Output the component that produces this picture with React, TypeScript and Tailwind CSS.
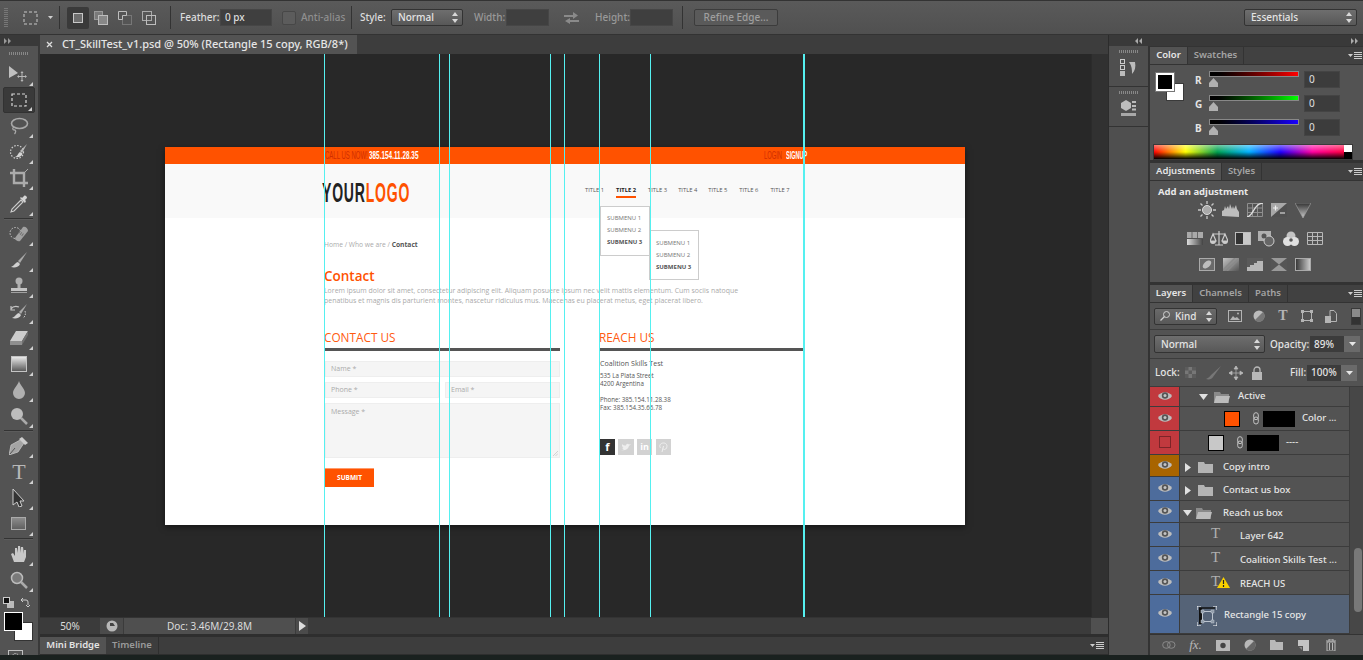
import React from "react";

const UI = "[font-family:'Noto_Sans','Open_Sans',sans-serif]";

function Ic({ w = 20, h = 20, children, className = "" }: { w?: number; h?: number; children: React.ReactNode; className?: string }) {
  return (
    <svg width={w} height={h} viewBox={`0 0 ${w} ${h}`} className={"shrink-0 " + className}>
      {children}
    </svg>
  );
}

function Updown() {
  return (
    <Ic w={6} h={11}>
      <path d="M3 0L6 4H0zM3 11L0 7H6z" fill="#d8d8d8" />
    </Ic>
  );
}

function Grad({ id, a = "#d0d0d0", b = "#6a6a6a", x2 = 1, y2 = 1 }: { id: string; a?: string; b?: string; x2?: number; y2?: number }) {
  return (
    <defs>
      <linearGradient id={id} x1="0" y1="0" x2={x2} y2={y2}>
        <stop offset="0" stopColor={a} />
        <stop offset="1" stopColor={b} />
      </linearGradient>
    </defs>
  );
}

function Tool({ children, active }: { children: React.ReactNode; active?: boolean }) {
  return (
    <div
      className={
        "relative shrink-0 h-[26px] w-[32px] ml-[3px] flex items-center justify-center rounded-[2px] " +
        (active ? "bg-[#3a3a3a] border border-[#323232]" : "")
      }
    >
      {children}
      <svg width="4" height="4" viewBox="0 0 4 4" className="absolute right-[2px] bottom-[1px]">
        <path d="M4 0V4H0z" fill="#d0d0d0" />
      </svg>
    </div>
  );
}

function Sep() {
  return <div className="shrink-0 h-[2px] w-[29px] ml-[4px] my-[1px] bg-[#333333] border-b border-[#5c5c5c]" />;
}

const toolGroups: React.ReactNode[][] = [
  [
    <Ic w={20} h={18} key="m"><path d="M0 1L9 8L0 13z" fill="#c0c0c0" /><path d="M13 7v9M9 11.500h8" stroke="#b8b8b8" strokeWidth="1" /><path d="M13 6l1.500 2h-3zM13 17l1.500-2h-3zM8 11.500l2-1.500v3zM18 11.500l-2-1.500v3z" fill="#b8b8b8" /></Ic>,
    <Ic w={16} h={14} key="mq"><rect x="1" y="1" width="14" height="12" fill="none" stroke="#d8d8d8" strokeWidth="1.200" strokeDasharray="3 2" /></Ic>,
    <Ic w={20} h={18} key="l"><ellipse cx="10.500" cy="6.500" rx="8" ry="5" fill="none" stroke="#a8a8a8" strokeWidth="1.600" /><path d="M5 10c-2 1-1.500 3 .5 3s1 3 0 4" fill="none" stroke="#a8a8a8" strokeWidth="1.300" /></Ic>,
    <Ic w={20} h={18} key="q"><circle cx="8" cy="9" r="6.500" fill="none" stroke="#cccccc" strokeWidth="1.200" strokeDasharray="1.500 1.500" /><path d="M18 1L11 8l2 2z" fill="#b8b8b8" /><path d="M11 9c-2 1-2 4-5 5 4 1 7-1 7.500-3.500z" fill="#d4d4d4" /></Ic>,
    <Ic w={18} h={18} key="c"><path d="M4 0v14h14M0 4h14v14" fill="none" stroke="#ababab" strokeWidth="2.400" /><path d="M14 4l4-4" stroke="#ababab" strokeWidth="1" /></Ic>,
    <Ic w={18} h={18} key="e"><path d="M11 5L2 14l-1 3 3-1 9-9z" fill="#555555" stroke="#cccccc" strokeWidth="1.100" /><path d="M10 3l5 5 1-2-1-1 2-2c0-2-2-3-3-2l-2 2-1-1z" fill="#d4d4d4" /></Ic>,
  ],
  [
    <Ic w={20} h={18} key="h"><circle cx="6.500" cy="8" r="5.500" fill="none" stroke="#cccccc" strokeDasharray="1.500 1.500" /><path d="M6 13L14 2c2-1 5 1 5 4l-8 10c-2 1-5-1-5-3z" fill="#a0a0a0" /><path d="M10 7l4 3" stroke="#707070" strokeWidth="3" strokeDasharray="1 1" /></Ic>,
    <Ic w={20} h={18} key="b"><path d="M18 1L9 10l2 2z" fill="#aaaaaa" /><path d="M9 11c-2 0-3 3-7 5 4 1 8 0 9-3z" fill="#d0d0d0" /></Ic>,
    <Ic w={20} h={18} key="s"><circle cx="10" cy="4" r="3.500" fill="#b0b0b0" /><path d="M8.500 6h3v5h-3z" fill="#b0b0b0" /><path d="M2 11h16v3H2z" fill="#c4c4c4" /><path d="M2 15.500h16" stroke="#a0a0a0" /></Ic>,
    <Ic w={20} h={18} key="hb"><path d="M18 1L10 9l2 2z" fill="#aaaaaa" /><path d="M10 10c-2 0-3 3-7 5 4 1 8 0 9-3z" fill="#d0d0d0" /><path d="M2 6c2-3 5-3 8-2M2 3v4h4" fill="none" stroke="#c4c4c4" strokeWidth="1.200" /><path d="M16 8c1 3 0 6-2 7" stroke="#c4c4c4" strokeDasharray="1.500 1" fill="none" /></Ic>,
    <Ic w={20} h={16} key="er"><path d="M7 1h12L13 11H1z" fill="#cccccc" /><path d="M1 11h12v4H1z" fill="#8e8e8e" /><path d="M13 11l6-10v4l-6 10z" fill="#707070" /></Ic>,
    <Ic w={16} h={16} key="gr"><Grad id="g1" a="#eeeeee" b="#555555" x2={0} y2={1} /><rect x="0.500" y="0.500" width="15" height="15" fill="url(#g1)" stroke="#c4c4c4" /></Ic>,
    <Ic w={14} h={18} key="bl"><path d="M7 0C6 4 1 8 1 12a6 6 0 0 0 12 0C13 8 8 4 7 0z" fill="#b0b0b0" /></Ic>,
    <Ic w={18} h={18} key="dd"><circle cx="7" cy="7" r="6" fill="#bdbdbd" /><path d="M11 11l6 6" stroke="#aaaaaa" strokeWidth="2.500" /></Ic>,
  ],
  [
    <Ic w={20} h={18} key="p"><path d="M13 2L2 8 0 18l9-3 6-9z" fill="#a4a4a4" stroke="#cccccc" strokeWidth=".7" /><path d="M13 0l6 6-3 2-6-6z" fill="#cccccc" /><path d="M1 17l5-6" stroke="#555555" /></Ic>,
    <span key="t" className="text-[22px] leading-none text-[#b8b8b8] [font-family:'Liberation_Serif',serif]">T</span>,
    <Ic w={14} h={18} key="ps"><path d="M1 0L12 12H8l2 5-3 1-2-5-4 3z" fill="#333333" stroke="#cccccc" /></Ic>,
    <Ic w={16} h={14} key="r"><Grad id="g2" a="#8e8e8e" b="#5e5e5e" x2={0} y2={1} /><rect x="0.500" y="0.500" width="14" height="12" fill="url(#g2)" stroke="#aaaaaa" /></Ic>,
  ],
  [
    <Ic w={18} h={18} key="ha"><path d="M4 17L1 9l2-1 2 3V3l2 0 1 5V1h2l1 7V2l2 0 1 7V5h2v7l-2 5z" fill="#c8c8c8" /></Ic>,
    <Ic w={18} h={18} key="z"><circle cx="7" cy="7" r="5.500" fill="#7a7a7a" stroke="#bbbbbb" strokeWidth="1.500" /><path d="M11 11l6 6" stroke="#aaaaaa" strokeWidth="2.500" /></Ic>,
  ],
];

function LeftTools() {
  return (
    <div className="w-[40px] h-full bg-[#535353] flex flex-col border-r-2 border-[#393939] overflow-hidden">
      <div className="shrink-0 h-[11px] bg-[#393939] flex items-center pl-[4px]">
        <Ic w={8} h={6}><path d="M0 0l3 3-3 3zM4 0l3 3-3 3z" fill="#999999" /></Ic>
      </div>
      <div className="shrink-0 h-[15px] flex items-center justify-center">
        <div className="w-[20px] h-[3px] [background:repeating-linear-gradient(90deg,#888888_0,#888888_1px,transparent_1px,transparent_2px)]" />
      </div>
      {toolGroups.map((g, i) => (
        <React.Fragment key={i}>
          {i > 0 && <Sep />}
          {g.map((t, j) => (
            <Tool key={j} active={i === 0 && j === 1}>
              {t}
            </Tool>
          ))}
        </React.Fragment>
      ))}
      <div className="shrink-0 h-[16px] flex items-center justify-between pl-[3px] pr-[8px] mt-[1px]">
        <Ic w={11} h={11}><rect x="4" y="4" width="7" height="7" fill="#bbbbbb" /><rect x=".5" y=".5" width="6" height="6" fill="#111111" stroke="#cccccc" /></Ic>
        <Ic w={11} h={11}><path d="M2 3h5q2 0 2 2v3M2 3l2-2M2 3l2 2M9 10l-2-2M9 10l2-2" fill="none" stroke="#cccccc" /></Ic>
      </div>
      <div className="shrink-0 relative h-[30px] ml-[4px] mt-[2px]">
        <div className="absolute left-[10px] top-[10px] w-[19px] h-[19px] bg-white border border-[#333333]" />
        <div className="absolute left-0 top-0 w-[19px] h-[19px] bg-black border border-white" />
      </div>
      <div className="shrink-0 mt-[8px] ml-[8px] w-[15px] h-[12px] border border-[#c0c0c0] flex items-center justify-center">
        <div className="w-[7px] h-[7px] rounded-full border border-dotted border-[#c0c0c0]" />
      </div>
    </div>
  );
}

function OptField({ className = "", children }: { className?: string; children?: React.ReactNode }) {
  return (
    <div className={"h-[17px] bg-[#3f3f3f] border border-[#464646] flex items-center text-[#dcdcdc] pl-[4px] " + className}>
      {children}
    </div>
  );
}

function Select({ label, className = "" }: { label: string; className?: string }) {
  return (
    <div className={"h-[17px] rounded-[2px] border border-[#333333] bg-gradient-to-b from-[#6e6e6e] to-[#585858] flex items-center justify-between pl-[6px] pr-[4px] text-[#e4e4e4] text-[10px] font-medium " + className}>
      <span>{label}</span>
      <Updown />
    </div>
  );
}

function OptionsBar() {
  const vsep = "w-[1px] h-[23px] bg-[#333333]";
  return (
    <div className="h-[35px] shrink-0 bg-gradient-to-b from-[#5a5a5a] to-[#505050] border-y border-[#333333] flex items-center text-[10px] font-medium text-[#dddddd]">
      <div className="ml-[4px] w-[4px] h-[19px] [background:repeating-linear-gradient(0deg,#777777_0,#777777_1px,transparent_1px,transparent_2px)]" />
      <Ic w={16} h={14} className="ml-[15px]"><rect x="1" y="1" width="13" height="12" fill="none" stroke="#c8c8c8" strokeDasharray="3 2" /></Ic>
      <Ic w={5} h={3} className="ml-[9px]"><path d="M0 0h5L2.500 3z" fill="#d0d0d0" /></Ic>
      <div className={"ml-[6px] " + vsep} />
      <div className="ml-[7px] w-[22px] h-[22px] rounded-[2px] bg-[#3a3a3a] flex items-center justify-center">
        <div className="w-[10px] h-[10px] bg-[#6e6e6e] border border-[#c8c8c8]" />
      </div>
      <Ic w={14} h={14} className="ml-[5px]"><rect x=".5" y=".5" width="8" height="8" fill="#7a7a7a" stroke="#9a9a9a" /><rect x="4.500" y="4.500" width="9" height="9" fill="#888888" stroke="#bdbdbd" /></Ic>
      <Ic w={14} h={14} className="ml-[10px]"><rect x="4.500" y="4.500" width="9" height="9" fill="#555555" stroke="#777777" /><path d="M4.500 8.500h-4v-8h8v4h-4z" fill="#555555" stroke="#bdbdbd" /></Ic>
      <Ic w={14} h={14} className="ml-[10px]"><rect x=".5" y=".5" width="9" height="9" fill="none" stroke="#aaaaaa" /><rect x="4.500" y="4.500" width="9" height="9" fill="none" stroke="#bdbdbd" /></Ic>
      <div className={"ml-[14px] " + vsep} />
      <span className="ml-[9px] w-[40px]">Feather:</span>
      <OptField className="w-[52px]">0 px</OptField>
      <div className="ml-[10px] w-[14px] h-[14px] rounded-[2px] bg-[#5c5c5c] border border-[#474747]" />
      <span className="ml-[5px] w-[50px] text-[#8f8f8f]">Anti-alias</span>
      <div className={vsep} />
      <span className="ml-[8px] w-[31px]">Style:</span>
      <Select label="Normal" className="w-[72px]" />
      <span className="ml-[11px] w-[32px] text-[#999999]">Width:</span>
      <OptField className="w-[43px]" />
      <Ic w={15} h={13} className="ml-[15px]"><path d="M0 4h9V1l5 3.500L9 8V6H0zM15 9H6V7L1 10l5 3v-2h9z" fill="#8a8a8a" /></Ic>
      <span className="ml-[16px] w-[35px] text-[#999999]">Height:</span>
      <OptField className="w-[43px]" />
      <div className={"ml-[9px] " + vsep} />
      <div className="ml-[11px] w-[84px] h-[17px] rounded-[2px] border border-[#3c3c3c] bg-[#5a5a5a] flex items-center justify-center text-[#9f9f9f]">Refine Edge...</div>
      <Select label="Essentials" className="ml-auto mr-[6px] w-[113px]" />
    </div>
  );
}

const guides = [
  "left-[284px] w-[1px]",
  "left-[399px] w-[1px]",
  "left-[409px] w-[1px]",
  "left-[510px] w-[1px]",
  "left-[524px] w-[1px]",
  "left-[559px] w-[1px]",
  "left-[610px] w-[1px]",
  "left-[763px] w-[2px]",
];

const NARROW = "[font-family:'Liberation_Sans',sans-serif]";
const nav = [
  { t: "TITLE 1", m: "ml-0" },
  { t: "TITLE 2", m: "ml-[12px]", on: true },
  { t: "TITLE 3", m: "ml-[12px]" },
  { t: "TITLE 4", m: "ml-[11px]" },
  { t: "TITLE 5", m: "ml-[11px]" },
  { t: "TITLE 6", m: "ml-[12px]" },
  { t: "TITLE 7", m: "ml-[12px]" },
];

function Submenu({ className, pt }: { className: string; pt: string }) {
  return (
    <div className={"absolute w-[50px] h-[50px] bg-white border border-[#cccccc] pl-[6px] text-[6px] leading-[12px] text-[#777777] " + pt + " " + className}>
      <div>SUBMENU 1</div>
      <div>SUBMENU 2</div>
      <div className="font-bold text-[#555555]">SUBMENU 3</div>
    </div>
  );
}

function Artboard() {
  const field = "bg-[#f5f5f5] border border-[#eeeeee] text-[#aaaaaa] text-[7px] pl-[5px]";
  const squeeze = "inline-block whitespace-nowrap origin-left font-bold ";
  return (
    <div className="relative w-[800px] h-[378px] bg-white shadow-[0_2px_6px_rgba(0,0,0,0.5)] [font-family:'Open_Sans','Noto_Sans',sans-serif]">
      <div className={"h-[17px] bg-[#ff5200] flex items-center pl-[160px] text-[10px] " + NARROW}>
        <span className="w-[44px]"><span className={squeeze + "text-[#cf2d00] font-normal [transform:scaleX(0.6)]"}>CALL US NOW!</span></span>
        <span className="w-[395px]"><span className={squeeze + "text-white [transform:scaleX(0.64)]"}>385.154.11.28.35</span></span>
        <span className="w-[22px]"><span className={squeeze + "text-[#cf2d00] font-normal [transform:scaleX(0.58)]"}>LOGIN</span></span>
        <span className={squeeze + "text-white [transform:scaleX(0.55)]"}>SIGNUP</span>
      </div>
      <div className="h-[54px] bg-[#f9f9f9] flex items-center pl-[157px]">
        <div className={"w-[263px] mt-[4px] text-[27px] leading-none tracking-[1.5px] " + NARROW}>
          <span className={squeeze + "[transform:scaleX(0.52)]"}>
            <span className="text-[#222222]">YOUR</span>
            <span className="text-[#ff5200]">LOGO</span>
          </span>
        </div>
        <div className="flex text-[5.800px] text-[#555555] -mt-[1px]">
          {nav.map((n) => (
            <div key={n.t} className={"relative whitespace-nowrap " + n.m + (n.on ? " font-bold text-[#222222]" : "")}>
              {n.t}
              {n.on && <div className="absolute left-0 right-0 top-[10px] h-[2px] bg-[#ff5200]" />}
            </div>
          ))}
        </div>
      </div>
      <Submenu className="left-[435px] top-[59px]" pt="pt-[5px]" />
      <Submenu className="left-[484px] top-[83px]" pt="pt-[6px]" />
      <div className="pl-[159px] pt-[22px] pr-[160px]">
        <div className="text-[6.700px] leading-[10px] text-[#aaaaaa]">
          Home / Who we are / <span className="font-bold text-[#555555]">Contact</span>
        </div>
        <div className="mt-[17px] text-[13.500px] leading-[18px] font-semibold text-[#ff5200]">Contact</div>
        <div className="mt-[1px] text-[6.950px] leading-[10px] text-[#aaaaaa] w-[430px]">
          Lorem ipsum dolor sit amet, consectetur adipiscing elit. Aliquam posuere ipsum nec velit mattis elementum. Cum sociis natoque penatibus et magnis dis parturient montes, nascetur ridiculus mus. Maecenas eu placerat metus, eget placerat libero.
        </div>
        <div className="mt-[23px] flex">
          <div className="w-[236px]">
            <div className="text-[11.800px] leading-[16px] text-[#ff5a10]">CONTACT US</div>
            <div className="mt-[3px] h-[3px] bg-[#555555]" />
            <div className={"mt-[10px] ml-[1px] h-[16px] flex items-center " + field}>Name *</div>
            <div className="mt-[5px] ml-[1px] flex gap-[6px]">
              <div className={"w-[114px] h-[16px] flex items-center " + field}>Phone *</div>
              <div className={"flex-1 h-[16px] flex items-center " + field}>Email *</div>
            </div>
            <div className={"relative mt-[5px] ml-[1px] h-[55px] pt-[3px] " + field}>
              Message *
              <svg width="5" height="5" viewBox="0 0 5 5" className="absolute right-[1px] bottom-[1px]">
                <path d="M0 5L5 0M2.500 5L5 2.500" stroke="#bbbbbb" strokeWidth=".6" />
              </svg>
            </div>
            <div className="mt-[10px] ml-[1px] w-[49px] h-[19px] bg-[#ff5200] border-t border-[#ff9a6a] flex items-center justify-center text-white text-[6.500px] font-bold">SUBMIT</div>
          </div>
          <div className="ml-[39px] w-[205px]">
            <div className="text-[11.800px] leading-[16px] text-[#ff5a10]">REACH US</div>
            <div className="mt-[3px] h-[3px] bg-[#555555]" />
            <div className="mt-[7px] ml-[1px] text-[#555555]">
              <div className="text-[7.100px] leading-[10px]">Coalition Skills Test</div>
              <div className="mt-[4px] text-[6.200px] leading-[8px]">535 La Plata Street</div>
              <div className="text-[6.200px] leading-[8px]">4200 Argentina</div>
              <div className="mt-[8px] text-[6.200px] leading-[8px]">Phone: 385.154.11.28.38</div>
              <div className="text-[6.200px] leading-[8px]">Fax: 385.154.35.66.78</div>
            </div>
            <div className="mt-[27px] ml-[1px] flex gap-[3px]">
              <div className="w-[15px] h-[16px] bg-[#333333] flex items-center justify-center text-white text-[11px] font-bold">f</div>
              <div className="w-[16px] h-[16px] bg-[#d2d2d2] flex items-center justify-center">
                <Ic w={10} h={8}><path d="M0 7c3 1 7 0 8-4l2-2-2 .5C7 0 5 1 5 2.500 3 2.500 2 2 1 1c0 2 0 3 1.500 3.500L1 5c1 1 1.500 1 2 1-1 1-2 1-3 1z" fill="#eeeeee" /></Ic>
              </div>
              <div className="w-[15px] h-[16px] bg-[#d2d2d2] flex items-center justify-center text-white text-[9px] font-bold">in</div>
              <div className="w-[15px] h-[16px] bg-[#d2d2d2] ml-[1px] flex items-center justify-center">
                <Ic w={9} h={11}><path d="M3 10L4.500 4M1.500 6C0 4 1 1 4.500 1S8.500 4 7.500 6 4.500 8 4 6.500" fill="none" stroke="#f0f0f0" /></Ic>
              </div>
            </div>
          </div>
        </div>
      </div>
    </div>
  );
}

function Workspace() {
  return (
    <div className="w-[1069px] shrink-0 flex flex-col h-full border-r border-[#2c2c2c]">
      <div className="h-[19px] shrink-0 bg-[#3d3d3d] flex items-end">
        <div className="w-[317px] h-[19px] bg-[#535353] flex items-center pl-[6px] text-[11px] font-medium text-[#e6e6e6] whitespace-nowrap">
          <Ic w={8} h={8}><path d="M1 1l5 5M6 1L1 6" stroke="#dddddd" strokeWidth="1.300" /></Ic>
          <span className="ml-[8px]">CT_SkillTest_v1.psd @ 50% (Rectangle 15 copy, RGB/8*)</span>
        </div>
      </div>
      <div className="relative flex-1 flex overflow-hidden">
        <div className="w-[1051px] bg-[#282828] pl-[125px] pt-[93px]">
          <Artboard />
        </div>
        <div className="flex-1 bg-[#313131] border-l border-[#2b2b2b]" />
        {guides.map((g, i) => (
          <div key={i} className={"absolute top-0 bottom-0 bg-[#55f0f0] " + g} />
        ))}
      </div>
      <div className="h-[17px] shrink-0 bg-[#3b3b3b] border-t border-[#333333] flex items-stretch text-[10px] text-[#dcdcdc]">
        <div className="w-[60px] flex items-center justify-center">50%</div>
        <div className="w-[23px] bg-[#4b4b4b] flex items-center justify-center">
          <Ic w={12} h={12}><circle cx="6" cy="6" r="5.500" fill="#b8b8b8" /><path d="M4 3h3l2 3H4z" fill="#444444" /></Ic>
        </div>
        <div className="ml-[1px] w-[171px] bg-[#4f4f4f] flex items-center justify-center">Doc: 3.46M/29.8M</div>
        <div className="ml-[1px] w-[12px] bg-[#4b4b4b] flex items-center justify-center">
          <Ic w={7} h={10}><path d="M0 0l7 5-7 5z" fill="#dddddd" /></Ic>
        </div>
        <div className="ml-auto w-[17px] bg-[#505050]" />
      </div>
      <div className="h-[3px] shrink-0 bg-[#2e2e2e]" />
      <div className="h-[17px] shrink-0 bg-[#3d3d3d] flex items-stretch text-[9.500px] font-semibold">
        <div className="w-[66px] bg-[#535353] text-[#e4e4e4] flex items-center justify-center">Mini Bridge</div>
        <div className="w-[53px] text-[#9a9a9a] border-r border-[#2f2f2f] flex items-center justify-center">Timeline</div>
        <div className="ml-auto mr-[4px] flex items-center"><Menu /></div>
      </div>
      <div className="h-[1px] shrink-0 bg-[#2e2e2e]" />
    </div>
  );
}

function Menu() {
  return (
    <Ic w={14} h={8}>
      <path d="M0 2h5L2.500 5z" fill="#cccccc" />
      <path d="M6 .5h8M6 2.500h8M6 4.500h8M6 6.500h8" stroke="#cccccc" strokeWidth="1" />
    </Ic>
  );
}

function DockItem({ children, h }: { children: React.ReactNode; h: string }) {
  return (
    <div className={"border-b border-[#333333] flex flex-col items-center " + h}>
      <div className="mt-[4px] w-[20px] h-[3px] [background:repeating-linear-gradient(90deg,#888888_0,#888888_1px,transparent_1px,transparent_2px)]" />
      <div className="mt-[6px]">{children}</div>
    </div>
  );
}

function Dock() {
  return (
    <div className="w-[41px] h-full shrink-0 flex flex-col bg-[#4f4f4f] border-r-2 border-[#333333] pt-[11px]">
      <DockItem h="h-[41px]">
        <Ic w={18} h={18}>
          <rect x=".5" y=".5" width="4" height="4" fill="none" stroke="#cccccc" />
          <rect x=".5" y="6.500" width="4" height="4" fill="none" stroke="#cccccc" />
          <rect y="12" width="5" height="5" fill="#bbbbbb" />
          <path d="M9 3h6c1 5 0 9-3 12 0-4 0-8-3-12z" fill="#bbbbbb" />
        </Ic>
      </DockItem>
      <DockItem h="h-[40px]">
        <Ic w={16} h={18}>
          <path d="M5 0l5 3v5L5 11 0 8V3z" fill="#bdbdbd" />
          <path d="M11 1h4v2h-4zM11 5h4v2h-4zM11 8.500h4v2h-4z" fill="#bbbbbb" />
          <rect y="13" width="15" height="3" fill="#a8a8a8" />
        </Ic>
      </DockItem>
    </div>
  );
}

function Tab({ label, on, w }: { label: string; on?: boolean; w: string }) {
  return (
    <div className={"h-[17px] flex items-center justify-center border-r border-[#333333] " + w + (on ? " bg-[#535353] text-[#e6e6e6]" : " text-[#a4a4a4]")}>
      {label}
    </div>
  );
}

function PanelHead({ children }: { children: React.ReactNode }) {
  return (
    <div className="h-[18px] shrink-0 bg-[#414141] border-b border-[#333333] flex text-[9.500px] font-semibold">
      {children}
      <div className="ml-auto mr-[1px] flex items-center"><Menu /></div>
    </div>
  );
}

function ColorRow({ label, gradient, mt }: { label: string; gradient: string; mt: string }) {
  return (
    <div className={"flex " + mt}>
      <div className="w-[17px] pl-[3px] pt-[2px] text-[10px] leading-[14px] font-bold text-[#e4e4e4]">{label}</div>
      <div className="w-[90px] h-[16px]">
        <div className={"h-[6px] border border-[#888888] " + gradient} />
        <Ic w={11} h={9} className="-ml-[1px] mt-[1px]"><path d="M5.500 0L10 5v4H1V5z" fill="#b0b0b0" /></Ic>
      </div>
      <div className="ml-[5px] w-[36px] h-[17px] bg-[#3c3c3c] border border-[#444444] text-[10px] text-[#e0e0e0] flex items-center pl-[4px]">0</div>
    </div>
  );
}

function ColorPanel() {
  return (
    <div className="h-[113px] shrink-0 bg-[#535353] flex flex-col">
      <PanelHead>
        <Tab label="Color" on w="w-[38px]" />
        <Tab label="Swatches" w="w-[56px]" />
      </PanelHead>
      <div className="flex pt-[6px] pl-[4px]">
        <div className="relative w-[38px] h-[36px]">
          <div className="absolute left-[12px] top-[12px] w-[18px] h-[18px] bg-white border border-[#3a3a3a]" />
          <div className="absolute left-[2px] top-[2px] w-[18px] h-[18px] bg-black border-2 border-white outline outline-[#777777]" />
        </div>
        <div>
          <ColorRow label="R" gradient="bg-gradient-to-r from-black to-[#ff0000]" mt="" />
          <ColorRow label="G" gradient="bg-gradient-to-r from-black to-[#00ff00]" mt="mt-[7px]" />
          <ColorRow label="B" gradient="bg-gradient-to-r from-black to-[#1a00ff]" mt="mt-[7px]" />
        </div>
      </div>
      <div className="mt-[8px] ml-[3px] w-[200px] h-[16px] flex border border-[#3a3a3a]">
        <div className="flex-1 relative bg-[linear-gradient(90deg,#ff0000,#ffff00,#00a050,#00b0ff,#2000ff,#ff00a0,#ff0040)]">
          <div className="absolute inset-0 bg-gradient-to-b from-[rgba(255,255,255,0.45)] via-transparent to-black" />
        </div>
        <div className="w-[8px] flex flex-col">
          <div className="flex-1 bg-white" />
          <div className="flex-1 bg-black" />
        </div>
      </div>
    </div>
  );
}

const adjRows: React.ReactNode[][] = [
  [
    <Ic w={18} h={18} key="1"><circle cx="9" cy="9" r="4.500" fill="#aaaaaa" stroke="#dddddd" /><path d="M9 0v3M9 15v3M0 9h3M15 9h3M2.500 2.500l2 2M13.500 13.500l2 2M2.500 15.500l2-2M13.500 4.500l2-2" stroke="#c8c8c8" strokeWidth="1.300" /></Ic>,
    <Ic w={18} h={14} key="2"><path d="M0 13V8l2-1 1-4 1 3 2-3 1 3 1-5 2 5 1-3 1 3 2-4 1 4 2 3v5z" fill="#bdbdbd" /></Ic>,
    <Ic w={16} h={14} key="3"><path d="M.5.5h15v13H.5zM5.500.5v13M10.500.5v13M.5 5h15M.5 9.500h15" fill="none" stroke="#8f8f8f" /><path d="M0 14C7 13 6 1 16 0" fill="none" stroke="#e0e0e0" strokeWidth="1.300" /></Ic>,
    <Ic w={16} h={14} key="4"><rect width="16" height="14" fill="#a8a8a8" /><path d="M0 14L16 0v14z" fill="#505050" /><path d="M2 5h5M4.500 2.500v5M9 10h5" stroke="#eeeeee" strokeWidth="1.200" /></Ic>,
    <Ic w={16} h={15} key="5"><Grad id="a5" a="#333333" b="#cccccc" x2={0} y2={1} /><path d="M0 0h16L8 15z" fill="url(#a5)" stroke="#999999" strokeWidth=".7" /></Ic>,
  ],
  [
    <Ic w={16} h={13} key="6"><Grad id="a6" a="#dddddd" b="#444444" x2={1} y2={0} /><rect width="16" height="6" fill="#aaaaaa" /><path d="M5 0v6M10.500 0v6" stroke="#666666" /><rect y="7" width="16" height="6" fill="url(#a6)" /></Ic>,
    <Ic w={18} h={15} key="7"><path d="M9 0v14M3 3h12M3 3L0 10h6zM15 3l-3 7h6zM5 14h8" fill="none" stroke="#cccccc" strokeWidth="1.200" /><path d="M0 10a3 3 0 0 0 6 0zM12 10a3 3 0 0 0 6 0z" fill="#cccccc" /></Ic>,
    <Ic w={16} h={13} key="8"><rect x=".5" y=".5" width="15" height="12" fill="#333333" stroke="#bdbdbd" /><rect x="8" y="1" width="7" height="11" fill="#c8c8c8" /></Ic>,
    <Ic w={18} h={17} key="9"><rect y="1" width="13" height="10" fill="#b0b0b0" /><circle cx="11" cy="11" r="5" fill="#666666" stroke="#cccccc" /><circle cx="6" cy="6" r="2.500" fill="#555555" /></Ic>,
    <Ic w={16} h={15} key="10"><circle cx="8" cy="5" r="4.500" fill="#c4c4c4" /><circle cx="4.500" cy="10.500" r="4.500" fill="#e0e0e0" /><circle cx="11.500" cy="10.500" r="4.500" fill="#e0e0e0" /><circle cx="8" cy="9" r="1.800" fill="#555555" /></Ic>,
    <Ic w={16} h={13} key="11"><path d="M.5.5h15v12H.5zM5.500.5v12M10.500.5v12M.5 4.500h15M.5 8.500h15" fill="none" stroke="#b8b8b8" /></Ic>,
  ],
  [
    <Ic w={16} h={13} key="12"><rect x=".5" y=".5" width="15" height="12" fill="#6a6a6a" stroke="#aaaaaa" /><ellipse cx="8" cy="6.500" rx="5" ry="3" fill="#bdbdbd" transform="rotate(-40 8 6.500)" /></Ic>,
    <Ic w={16} h={13} key="13"><Grad id="a13" a="#c4c4c4" b="#555555" /><rect width="16" height="13" fill="url(#a13)" /><path d="M0 12L12 0M4 13L16 1" stroke="#8a8a8a" strokeWidth="1.500" /></Ic>,
    <Ic w={16} h={13} key="14"><rect width="16" height="13" fill="#5a5a5a" /><path d="M0 13V9l3 0 0-2 4 0 0-2 3 0 0-2 6 0v10z" fill="#b8b8b8" /></Ic>,
    <Ic w={16} h={13} key="15"><rect width="16" height="13" fill="#999999" /><path d="M0 0l8 6.500L0 13zM16 0L8 6.500 16 13z" fill="#555555" /></Ic>,
    <Ic w={16} h={13} key="16"><Grad id="a16" a="#333333" b="#d0d0d0" x2={1} y2={0} /><rect x=".5" y=".5" width="15" height="12" fill="url(#a16)" stroke="#aaaaaa" /></Ic>,
  ],
];

function AdjPanel() {
  return (
    <div className="h-[119px] shrink-0 bg-[#535353] flex flex-col">
      <PanelHead>
        <Tab label="Adjustments" on w="w-[72px]" />
        <Tab label="Styles" w="w-[40px]" />
      </PanelHead>
      <div className="h-[15px] mt-[3px] pl-[8px] text-[9.500px] font-bold text-[#e8e8e8] leading-[15px]">Add an adjustment</div>
      <div className="flex flex-col items-center pr-[3px]">
        {adjRows.map((r, i) => (
          <div key={i} className={"h-[18px] flex items-center " + (i === 0 ? "mt-[2px]" : i === 1 ? "mt-[10px]" : "mt-[8px]")}>
            {r.map((x, j) => (
              <div key={j} className="w-[24px] flex justify-center">{x}</div>
            ))}
          </div>
        ))}
      </div>
    </div>
  );
}

function Eye() {
  return (
    <Ic w={14} h={10}>
      <path d="M0 5C3 0 11 0 14 5 11 10 3 10 0 5z" fill="#bdbdbd" />
      <circle cx="7" cy="4.500" r="3.200" fill="#555555" />
      <circle cx="7" cy="4.500" r="1.500" fill="#c4c4c4" />
    </Ic>
  );
}

function Folder({ open }: { open?: boolean }) {
  return (
    <Ic w={16} h={12}>
      <path d="M0 1h6l1 2h8v9H0z" fill={open ? "#8a8a8a" : "#b4b4b4"} />
      {open && <path d="M2 5h14l-2 7H0z" fill="#bcbcbc" />}
    </Ic>
  );
}

function Tri({ open }: { open?: boolean }) {
  return open ? (
    <Ic w={9} h={6}><path d="M0 0h9L4.500 6z" fill="#e0e0e0" /></Ic>
  ) : (
    <Ic w={6} h={9}><path d="M0 0l6 4.500L0 9z" fill="#e0e0e0" /></Ic>
  );
}

function Link() {
  return (
    <Ic w={6} h={13}>
      <rect x=".7" y=".7" width="4.600" height="7" rx="2.300" fill="none" stroke="#c4c4c4" />
      <rect x=".7" y="5" width="4.600" height="7" rx="2.300" fill="none" stroke="#c4c4c4" />
    </Ic>
  );
}

function Row({ eye, h, children, selected, noEye, low }: { eye: string; h: string; children: React.ReactNode; selected?: boolean; noEye?: boolean; low?: boolean }) {
  return (
    <div className={"flex shrink-0 border-b border-[#3c3c3c] " + h}>
      <div className={"w-[30px] pb-[2px] flex items-center justify-center shrink-0 border-r border-[#3c3c3c] " + eye}>
        {noEye ? <div className="w-[12px] h-[12px] border border-[#7c2428]" /> : <Eye />}
      </div>
      <div className={"flex-1 flex items-center text-[9.500px] font-medium text-[#e6e6e6] whitespace-nowrap " + (low ? "pt-[3px] " : "") + (selected ? "bg-[#556377]" : "bg-[#535353]")}>{children}</div>
    </div>
  );
}

function TLayer() {
  return <span className="w-[12px] text-[15px] leading-none text-[#b0b0b0] -mt-[5px] [font-family:'Liberation_Serif',serif]">T</span>;
}

function LayersPanel() {
  return (
    <div className="flex-1 bg-[#535353] flex flex-col min-h-0">
      <PanelHead>
        <Tab label="Layers" on w="w-[43px]" />
        <Tab label="Channels" w="w-[56px]" />
        <Tab label="Paths" w="w-[39px]" />
      </PanelHead>
      <div className="h-[27px] shrink-0 border-b border-[#3c3c3c] flex items-center pl-[4px] text-[10px] font-medium text-[#e4e4e4]">
        <div className="w-[63px] h-[17px] rounded-[2px] border border-[#333333] bg-gradient-to-b from-[#6a6a6a] to-[#585858] flex items-center pl-[5px] pr-[4px]">
          <Ic w={10} h={10}><circle cx="6.500" cy="3.500" r="3" fill="none" stroke="#d0d0d0" /><path d="M4.500 5.500L.5 9.500" stroke="#d0d0d0" strokeWidth="1.300" /></Ic>
          <span className="ml-[5px]">Kind</span>
          <span className="ml-auto"><Updown /></span>
        </div>
        <div className="flex ml-[6px]">
          {[
            <Ic w={14} h={12} key="a"><rect x=".5" y=".5" width="13" height="11" fill="none" stroke="#b4b4b4" /><path d="M2 10l3-4 2 2 2-1 3 3z" fill="#b4b4b4" /><circle cx="10" cy="3.500" r="1" fill="#b4b4b4" /></Ic>,
            <Ic w={12} h={12} key="b"><circle cx="6" cy="6" r="5.500" fill="#bbbbbb" /><path d="M10 2L2 10a5.500 5.500 0 0 0 8-8z" fill="#777777" /></Ic>,
            <span key="c" className="text-[14px] leading-none font-bold text-[#b4b4b4] [font-family:'Liberation_Serif',serif]">T</span>,
            <Ic w={12} h={12} key="d"><rect x="1.500" y="1.500" width="9" height="9" fill="none" stroke="#b4b4b4" /><path d="M0 0h3v3H0zM9 0h3v3H9zM0 9h3v3H0zM9 9h3v3H9z" fill="#b4b4b4" /></Ic>,
            <Ic w={12} h={13} key="e"><path d="M5 .5h4l2.500 3v8h-6.500z" fill="none" stroke="#b4b4b4" /><rect y="6" width="6" height="7" fill="#b4b4b4" /></Ic>,
          ].map((x, i) => (
            <div key={i} className="w-[24px] h-[14px] flex items-center justify-center">{x}</div>
          ))}
        </div>
        <div className="ml-[8px] w-[10px] h-[17px] flex flex-col bg-[#333333] border border-[#3a3a3a]">
          <div className="h-[8px] bg-[#8a8a8a]" />
        </div>
      </div>
      <div className="h-[29px] shrink-0 border-b border-[#3c3c3c] flex items-center pl-[4px] text-[10px] font-medium text-[#e4e4e4]">
        <Select label="Normal" className="w-[111px] h-[18px]" />
        <span className="ml-[5px] w-[40px]">Opacity:</span>
        <div className="w-[34px] h-[16px] bg-[#3c3c3c] flex items-center pl-[4px]">89%</div>
        <div className="w-[16px] h-[16px] bg-[#6a6a6a] flex items-center justify-center"><Ic w={7} h={4}><path d="M0 0h7L3.500 4z" fill="#e6e6e6" /></Ic></div>
      </div>
      <div className="h-[28px] shrink-0 border-b border-[#3c3c3c] flex items-center pl-[5px] text-[10px] font-medium text-[#e4e4e4]">
        <span className="w-[30px]">Lock:</span>
        <Ic w={11} h={11}><rect width="11" height="11" fill="#777777" /><path d="M0 0h3.500v3.500H0zM7 0h4v3.500H7zM3.500 3.500H7V7H3.500zM0 7h3.500v4H0zM7 7h4v4H7z" fill="#5c5c5c" /></Ic>
        <Ic w={15} h={14} className="ml-[10px]"><path d="M15 0L5 9l2 2zM5 9c-1 1-2 3-5 4 3 1 6 0 7-2z" fill="#777777" /></Ic>
        <Ic w={14} h={14} className="ml-[8px]"><path d="M7 0v14M0 7h14M7 0L5 3h4zM7 14l-2-3h4zM0 7l3-2v4zM14 7l-3-2v4z" fill="#b8b8b8" stroke="#b8b8b8" strokeWidth=".7" /></Ic>
        <Ic w={12} h={14} className="ml-[8px]"><path d="M3 6V4a3 3 0 0 1 6 0v2" fill="none" stroke="#b8b8b8" strokeWidth="1.300" /><rect x="1" y="6" width="10" height="8" fill="#b8b8b8" /></Ic>
        <span className="ml-[26px] w-[18px] pl-[1px]">Fill:</span>
        <div className="w-[34px] h-[16px] bg-[#3c3c3c] flex items-center pl-[4px]">100%</div>
        <div className="w-[16px] h-[16px] bg-[#6a6a6a] flex items-center justify-center"><Ic w={7} h={4}><path d="M0 0h7L3.500 4z" fill="#e6e6e6" /></Ic></div>
      </div>
      <div className="flex-1 flex min-h-0">
        <div className="w-[199px] flex flex-col">
          <Row eye="bg-[#c1393e]" h="h-[20px]">
            <div className="ml-[19px] flex items-center"><Tri open /><span className="ml-[6px]"><Folder open /></span><span className="ml-[8px]">Active</span></div>
          </Row>
          <Row eye="bg-[#c1393e]" h="h-[24px]">
            <div className="ml-[44px] w-[16px] h-[16px] bg-[#ff5200] border border-black" />
            <span className="ml-[13px]"><Link /></span>
            <div className="ml-[4px] w-[32px] h-[16px] bg-black" />
            <span className="ml-[7px]">Color ...</span>
          </Row>
          <Row eye="bg-[#c1393e]" h="h-[24px]" noEye>
            <div className="ml-[28px] w-[16px] h-[16px] bg-[#c8c8c8] border border-black" />
            <span className="ml-[13px]"><Link /></span>
            <div className="ml-[4px] w-[32px] h-[16px] bg-black" />
            <span className="ml-[7px]">----</span>
          </Row>
          <Row eye="bg-[#a86400]" h="h-[22px]" low>
            <div className="ml-[5px] flex items-center"><Tri /><span className="ml-[7px]"><Folder /></span><span className="ml-[9px]">Copy intro</span></div>
          </Row>
          <Row eye="bg-[#4d6c9c]" h="h-[24px]" low>
            <div className="ml-[5px] flex items-center"><Tri /><span className="ml-[7px]"><Folder /></span><span className="ml-[9px]">Contact us box</span></div>
          </Row>
          <Row eye="bg-[#4d6c9c]" h="h-[22px]" low>
            <div className="ml-[3px] flex items-center"><Tri open /><span className="ml-[4px]"><Folder open /></span><span className="ml-[11px]">Reach us box</span></div>
          </Row>
          <Row eye="bg-[#4d6c9c]" h="h-[24px]" low>
            <div className="ml-[31px] flex items-center"><TLayer /><span className="ml-[17px]">Layer 642</span></div>
          </Row>
          <Row eye="bg-[#4d6c9c]" h="h-[24px]" low>
            <div className="ml-[31px] flex items-center"><TLayer /><span className="ml-[17px]">Coalition Skills Test ...</span></div>
          </Row>
          <Row eye="bg-[#4d6c9c]" h="h-[24px]" low>
            <div className="ml-[31px] flex items-center relative">
              <TLayer />
              <Ic w={13} h={11} className="absolute left-[6px] top-[0px]"><path d="M6.500 0L13 11H0z" fill="#f7d000" /><path d="M6.500 3v4M6.500 8v2" stroke="#222222" strokeWidth="1.200" /></Ic>
              <span className="ml-[17px]">REACH US</span>
            </div>
          </Row>
          <Row eye="bg-[#4d6c9c]" h="h-[39px]" selected low>
            <Ic w={20} h={20} className="ml-[17px]">
              <path d="M0 4V0h4M16 0h4v4M20 16v4h-4M4 20H0v-4" fill="none" stroke="#ffffff" />
              <path d="M2 18V2h3v16z" fill="#111111" />
              <path d="M2 2h16" stroke="#111111" strokeWidth="1.500" />
              <rect x="5.500" y="5.500" width="10" height="10" fill="none" stroke="#bcc4cf" />
              <path d="M4 4h3v3H4zM14 4h3v3h-3zM4 14h3v3H4zM14 14h3v3h-3z" fill="#8d99a8" stroke="#bcc4cf" strokeWidth=".5" />
            </Ic>
            <span className="ml-[7px]">Rectangle 15 copy</span>
          </Row>
        </div>
        <div className="flex-1 bg-[#474747] pl-[4px] pt-[161px] border-l border-[#3c3c3c]">
          <div className="w-[8px] h-[64px] rounded-full bg-[#787878]" />
        </div>
      </div>
      <div className="h-[21px] shrink-0 bg-[#535353] border-t border-[#333333] flex items-center">
        {[
          <Ic w={14} h={8} key="1"><rect x=".7" y=".7" width="7.500" height="6.500" rx="3.200" fill="none" stroke="#8a8a8a" /><rect x="5.500" y=".7" width="7.500" height="6.500" rx="3.200" fill="none" stroke="#8a8a8a" /></Ic>,
          <span key="2" className="text-[13px] italic text-[#b8b8b8] [font-family:'Liberation_Serif',serif]">fx.</span>,
          <Ic w={14} h={11} key="3"><rect width="14" height="11" fill="#b8b8b8" /><circle cx="7" cy="5.500" r="2.700" fill="#444444" /></Ic>,
          <Ic w={12} h={12} key="4"><circle cx="6" cy="6" r="5.500" fill="#b8b8b8" /><path d="M10 2L2 10a5.500 5.500 0 0 0 8-8z" fill="#666666" /></Ic>,
          <Ic w={13} h={10} key="5"><path d="M0 0h5L6 2h7v8H0z" fill="#b8b8b8" /></Ic>,
          <Ic w={11} h={11} key="6"><path d="M0 0h11v11H5V6H0z" fill="#c4c4c4" /><path d="M1 7h3v3z" fill="#888888" /></Ic>,
          <Ic w={10} h={12} key="7"><path d="M0 2h10M3 2V0h4v2M1 3h8v9H1zM3.500 4v7M6.500 4v7" fill="none" stroke="#b8b8b8" /></Ic>,
        ].map((x, i) => (
          <div key={i} className={"h-[14px] flex items-center justify-center w-[27px] " + (i === 0 ? "ml-[5px]" : "")}>{x}</div>
        ))}
      </div>
    </div>
  );
}

function RightPanels() {
  return (
    <div className="w-[213px] h-full flex flex-col bg-[#333333] pt-[12px] gap-[3px] overflow-hidden">
      <ColorPanel />
      <AdjPanel />
      <LayersPanel />
    </div>
  );
}

export default function App() {
  return (
    <div className={"w-[1363px] h-[660px] overflow-hidden bg-[#1a211f] flex flex-col " + UI}>
      <OptionsBar />
      <div className="h-[620px] shrink-0 flex relative">
        <div className="w-[40px] h-full shrink-0"><LeftTools /></div>
        <Workspace />
        <div className="relative w-[254px] shrink-0 flex h-full">
          <Dock />
          <RightPanels />
          <div className="absolute left-0 right-0 top-0 h-[11px] bg-[#393939]">
            <div className="absolute right-[4px] top-[3px]">
              <Ic w={8} h={6}><path d="M0 0l3 3-3 3zM4 0l3 3-3 3z" fill="#aaaaaa" /></Ic>
            </div>
            <div className="absolute right-[220px] top-[3px]">
              <Ic w={8} h={6}><path d="M3 0L0 3l3 3zM7 0L4 3l3 3z" fill="#aaaaaa" /></Ic>
            </div>
          </div>
        </div>
      </div>
      <div className="flex-1 bg-[#1a211f]" />
    </div>
  );
}
